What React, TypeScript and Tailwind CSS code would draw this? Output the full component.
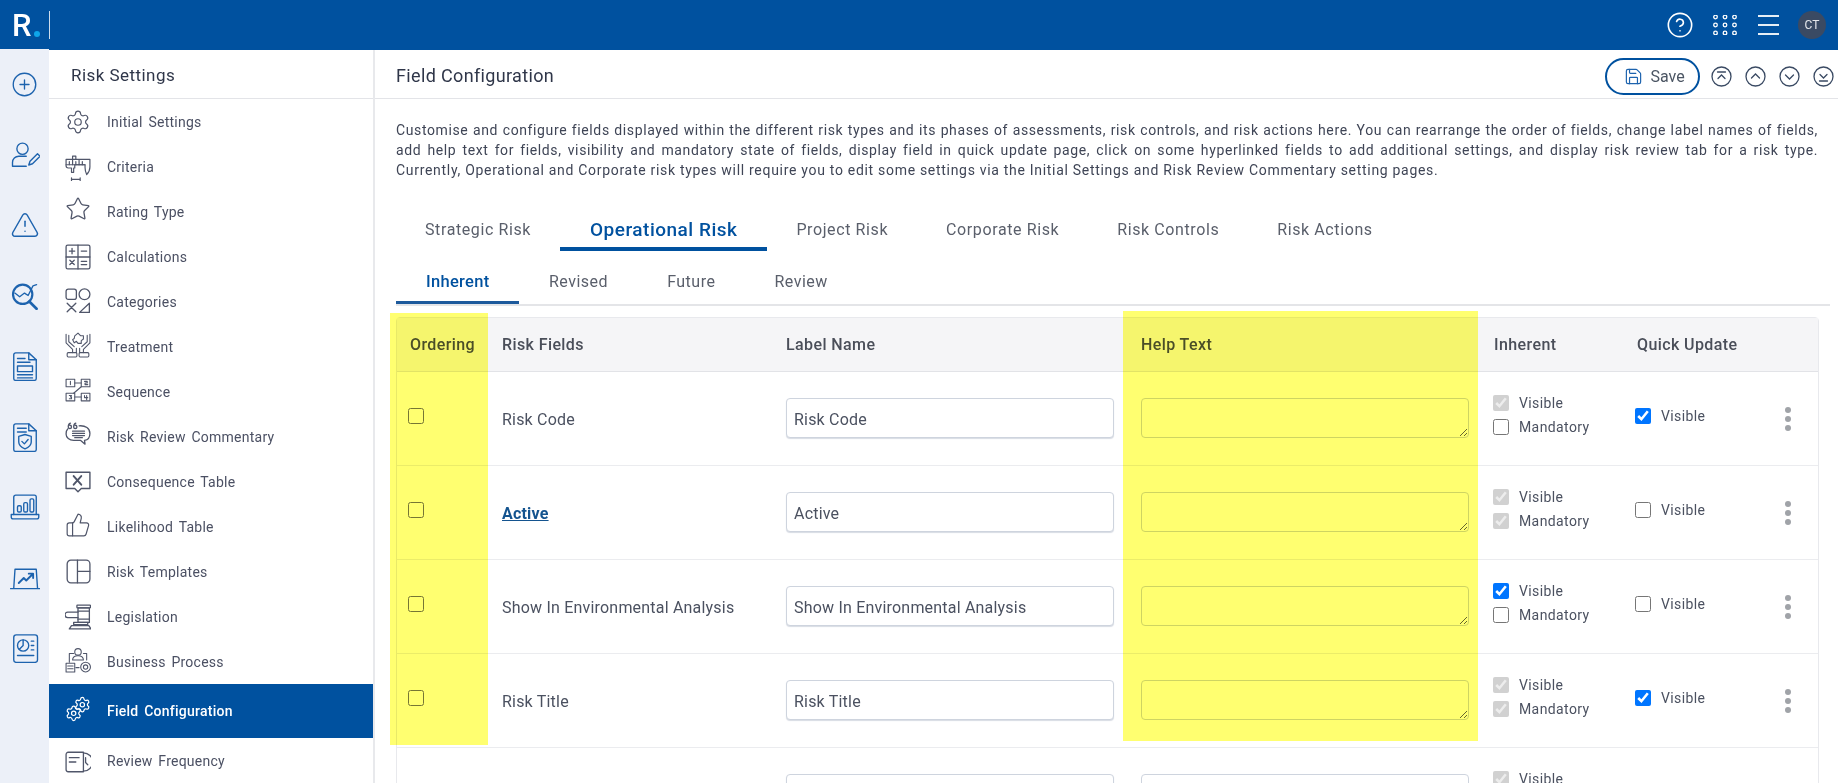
import React from 'react';
import {
  CircleHelp,
  CirclePlus,
  Save,
  Settings,
  Star,
  ThumbsUp,
  TriangleAlert,
} from 'lucide-react';

const iconProps = {
  width: 26,
  height: 26,
  viewBox: '0 0 24 24',
  fill: 'none',
  stroke: 'currentColor',
  strokeWidth: 1.2,
  strokeLinecap: 'round' as const,
  strokeLinejoin: 'round' as const,
};

// sidebar icons
const CriteriaIcon = () => (
  <svg {...iconProps} strokeWidth={1.1}>
    <path d="M1 4h22v7c0 3-1 5-3 7-1-2-1.500-4-1.500-6.500V9H9v3H8v4H6v-4H3a2 2 0 0 1-2-2z" />
    <path d="M7 4V1h3v3M1 9h17.500" />
    <path d="M4 6v3M7 5v4M10 6v3M13 5v4M16 6v3" />
    <path d="M6 22.500h8M6 21v3M14 21v3" />
  </svg>
);

const CalcIcon = () => (
  <svg {...iconProps}>
    <rect x="1" y="1" width="22" height="22" rx="1.5" />
    <path d="M12 1v22M1 12h22M4 6.500h5M6.500 4v5M15 6.500h5M4.500 15l4 4M8.500 15l-4 4M15 16h5M15 19h5" />
  </svg>
);

const CategoriesIcon = () => (
  <svg {...iconProps}>
    <rect x="1" y="1" width="9.500" height="9.500" rx="2" />
    <circle cx="18" cy="5.800" r="5" />
    <path d="M2 14l8 8M10 14l-8 8M22.500 14v8.500h-9z" />
  </svg>
);

const TreatmentIcon = () => (
  <svg {...iconProps} strokeWidth={1}>
    <path d="M9 3.500l3-2.500 2.500 2.500h2.500v3l-2 1.500v2.500h-3l-1.500-2-2 1.500-1.500-3 1.500-1z" />
    <path d="M1 2v8l6 6v3M23 2v8l-6 6v3M3.500 3v6l5 4.500M20.500 3v6l-5 4.500M10.500 15v4M13.500 15v4" />
    <rect x="2" y="19" width="9" height="4" rx="1" />
    <rect x="13" y="19" width="9" height="4" rx="1" />
  </svg>
);

const SequenceIcon = () => (
  <svg {...iconProps} strokeWidth={1}>
    <rect x="1" y="2" width="8" height="7" />
    <rect x="15" y="2" width="8" height="7" />
    <rect x="1" y="15" width="8" height="7" />
    <rect x="15" y="15" width="8" height="7" />
    <path d="M9 5.500h6M9 18.500h6M15 9l-7 6M5 4v3M18 4h2.500v1.500H18.500V7H21M4 17h2l-1 1.500h1V20H4M18 17v2h3M20 17v4" />
  </svg>
);

const CommentaryIcon = () => (
  <svg {...iconProps}>
    <path d="M13 3.500c6-.500 10 2.500 10 7 0 3.500-2 6-5 6.500l.500 3.500-4-3.500H8c-4 0-7-2.500-7-6 0-2 .500-3.500 1.500-4.500" />
    <path d="M7 8.500h11M7 10.500h11M7 12.500h11M9 14.500h7" />
    <path d="M3 4.500a1.500 1.500 0 1 0 1.500-1.500M5 1C3.500 1.500 3 3 3 4.500M8 4.500A1.500 1.500 0 1 0 9.500 3M10 1C8.500 1.500 8 3 8 4.500" />
  </svg>
);

const ConsequenceIcon = () => (
  <svg {...iconProps} strokeWidth={1.3}>
    <path d="M1 3h22v15H15l-3 3-3-3H1z" />
    <path d="M8 6.500l7 8M15 6.500l-7 8" strokeWidth={1.800} />
  </svg>
);

const TemplateIcon = () => (
  <svg {...iconProps}>
    <rect x="2" y="1" width="21" height="21" rx="3.500" />
    <path d="M11.500 1v21M11.500 11.500H23" />
  </svg>
);

const GavelIcon = () => (
  <svg {...iconProps} strokeWidth={1.2}>
    <rect x="11" y="1" width="12.500" height="2.500" rx=".500" />
    <rect x="12" y="3.500" width="10.500" height="13.500" />
    <path d="M12 6.500h10.500M12 14h10.500" />
    <path d="M12 7.500H2.500a2.500 2.500 0 0 0 0 5H12" />
    <path d="M8 17h13v2H8zM4 23l2-3h16l2 3z" />
  </svg>
);

const BusinessIcon = () => (
  <svg {...iconProps} strokeWidth={1}>
    <circle cx="12" cy="4.500" r="3" />
    <path d="M7 12c0-3 2-4 5-4s5 1 5 4zM4 14V6h4M20 6h-3M20 6v6" />
    <rect x="1" y="15" width="8" height="8" />
    <path d="M2.500 17.500h5M2.500 20h5M10 19h3" />
    <circle cx="19" cy="18.500" r="4.500" />
    <circle cx="19" cy="18.500" r="2" />
  </svg>
);

const FieldConfigIcon = () => (
  <svg {...iconProps} strokeWidth={1.2}>
    <Settings x={8} y={0} width={16} height={16} strokeWidth={1.700} />
    <Settings x={0} y={8} width={16} height={16} strokeWidth={1.700} />
  </svg>
);

const FrequencyIcon = () => (
  <svg {...iconProps}>
    <path d="M17 3H3a2 2 0 0 0-2 2v14a2 2 0 0 0 2 2h14z" />
    <path d="M17 3.500a8.500 8.500 0 0 1 0 17M4 8h9M4 12h6M19 8v4.500l2 2" />
  </svg>
);

// left rail icons
const railProps = { ...iconProps, width: 30, height: 30, strokeWidth: 1.100 };

const UserPenIcon = () => (
  <svg {...railProps}>
    <circle cx="10" cy="7" r="4.500" />
    <path d="M2 21v-3a5 5 0 0 1 5-5h6M2 21h11M15 20l1-3 6-6 2 2-6 6z" />
  </svg>
);

const AnalyticsIcon = () => (
  <svg {...railProps} strokeWidth={1.100} width={29} height={29}>
    <circle cx="10.500" cy="11" r="8" strokeWidth={1.800} />
    <path d="M16 17l6 6" strokeWidth={2.200} />
    <path d="M4 10l4 3 4-3 3 2 4-8 3-1" />
  </svg>
);

const DocIcon = () => (
  <svg {...railProps}>
    <path d="M3 3a1.500 1.500 0 0 1 1.500-1.500H15L21 7v15a1.500 1.500 0 0 1-1.500 1.500h-15A1.500 1.500 0 0 1 3 22z" />
    <path d="M15 1.500V7h6M6 6h6M6 9h10M6 19h12M6 21.500h12" />
    <rect x="6" y="12" width="12" height="4.500" />
  </svg>
);

const ShieldDocIcon = () => (
  <svg {...railProps}>
    <path d="M3 3a1.500 1.500 0 0 1 1.500-1.500H15L21 7v15a1.500 1.500 0 0 1-1.500 1.500h-15A1.500 1.500 0 0 1 3 22z" />
    <path d="M15 1.500V7h6M6 5h7M6 8h7" />
    <path d="M12 10l5 1.500V16c0 3-2.500 4.500-5 5.500-2.500-1-5-2.500-5-5.500v-4.500z" />
    <path d="M9.500 15.500l2 2 3-3.500" />
  </svg>
);

const LaptopBarsIcon = () => (
  <svg {...railProps}>
    <path d="M3 18V4a1.500 1.500 0 0 1 1.500-1.500h15A1.500 1.500 0 0 1 21 4v14" />
    <path d="M1 18h22v2a1.500 1.500 0 0 1-1.500 1.500h-19A1.500 1.500 0 0 1 1 20z" />
    <rect x="6" y="11" width="3" height="5" rx="1" />
    <rect x="11" y="8.500" width="3" height="7.500" rx="1" />
    <rect x="16" y="5.500" width="3" height="10.500" rx="1" />
  </svg>
);

const LaptopTrendIcon = () => (
  <svg {...railProps}>
    <path d="M3 20l1-15h17l1 15M0.500 20.500h24" />
    <path d="M7 16l4-4 2 2 5-5M15 8.500h3.500V12" strokeWidth={1.500} />
  </svg>
);

const ReportIcon = () => (
  <svg {...railProps}>
    <rect x="3" y="1.500" width="19" height="22" rx="2" />
    <circle cx="10.500" cy="10" r="4.500" />
    <path d="M10.500 5.500V10l-3 3M17 6.500h2M17 10h2M17 13.500h2M6 18h13" />
  </svg>
);

const GridDots = () => (
  <svg width="24" height="20" viewBox="0 0 24 20" fill="none" stroke="currentColor" strokeWidth="1.300">
    {[2.500, 12, 21.500].map((cx) =>
      [2, 10, 18].map((cy) => <circle key={`${cx}-${cy}`} cx={cx} cy={cy} r="1.800" />),
    )}
  </svg>
);

// round arrows next to the save button
const RoundNav = ({ d }: { d: string }) => (
  <svg width="21" height="21" viewBox="0 0 21 21" fill="none" stroke="#3a4a63" strokeWidth="1.300" strokeLinecap="round">
    <circle cx="10.500" cy="10.500" r="9.500" />
    <path d={d} />
  </svg>
);

const menuItems = [
  { label: 'Initial Settings', icon: <Settings size={26} strokeWidth={1.1} />, shift: '-mt-[2px]' },
  { label: 'Criteria', icon: <CriteriaIcon /> },
  { label: 'Rating Type', icon: <Star size={26} strokeWidth={1.2} />, shift: '-mt-[8px]' },
  { label: 'Calculations', icon: <CalcIcon />, shift: '-mt-[2px]' },
  { label: 'Categories', icon: <CategoriesIcon />, shift: '-mt-[4px]' },
  { label: 'Treatment', icon: <TreatmentIcon />, shift: '-mt-[6px]' },
  { label: 'Sequence', icon: <SequenceIcon />, shift: '-mt-[6px]' },
  { label: 'Risk Review Commentary', icon: <CommentaryIcon />, shift: '-mt-[6px]' },
  { label: 'Consequence Table', icon: <ConsequenceIcon />, shift: '-mt-[2px]' },
  { label: 'Likelihood Table', icon: <ThumbsUp size={26} strokeWidth={1.1} />, shift: '-mt-[6px]' },
  { label: 'Risk Templates', icon: <TemplateIcon />, shift: '-mt-[2px]' },
  { label: 'Legislation', icon: <GavelIcon />, shift: '-mt-[2px]' },
  { label: 'Business Process', icon: <BusinessIcon />, shift: '-mt-[5px]' },
];

const railIcons = [
  <CirclePlus key="add" size={27} strokeWidth={1.2} />,
  <UserPenIcon key="user" />,
  <TriangleAlert key="alert" size={30} strokeWidth={1.2} />,
  <AnalyticsIcon key="analytics" />,
  <DocIcon key="doc" />,
  <ShieldDocIcon key="shield" />,
  <LaptopBarsIcon key="bars" />,
  <LaptopTrendIcon key="trend" />,
  <ReportIcon key="report" />,
];

type Box = 'on' | 'off' | 'locked';

type Row = {
  name: string;
  label: string;
  link?: boolean;
  visible: Box;
  mandatory: Box;
  quick: boolean;
};

const rows: Row[] = [
  { name: 'Risk Code', label: 'Risk Code', visible: 'locked', mandatory: 'off', quick: true },
  { name: 'Active', label: 'Active', link: true, visible: 'locked', mandatory: 'locked', quick: false },
  { name: 'Show In Environmental Analysis', label: 'Show In Environmental Analysis', visible: 'on', mandatory: 'off', quick: false },
  { name: 'Risk Title', label: 'Risk Title', visible: 'locked', mandatory: 'locked', quick: true },
  { name: '', label: '', visible: 'locked', mandatory: 'off', quick: false },
];

const columns = 'grid grid-cols-[93px_284px_355px_353px_143px_1fr]';

const CheckLine = ({ state, text }: { state: Box; text: string }) => (
  <label className="flex items-center gap-[10px] h-[24.500px]">
    <input
      type="checkbox"
      readOnly
      checked={state !== 'off'}
      disabled={state === 'locked'}
      className="w-[16px] h-[16px] m-0"
    />
    <span className="text-[14px] tracking-[0.4px] text-[#4b5160] mt-[1px]">{text}</span>
  </label>
);

const App: React.FC = () => {
  return (
    <div className="relative h-[783px] overflow-hidden flex flex-col bg-white font-['Roboto',sans-serif]">
      {/* top bar */}
      <header className="h-[50px] shrink-0 bg-[#00519f] flex items-center text-white">
        <div className="w-[49px] h-full flex items-center pl-[12px]">
          <span className="text-[31px] leading-none font-medium">R</span>
          <span className="w-[6px] h-[6px] rounded-full bg-[#0ea5e9] mt-[17px] ml-[2px]" />
        </div>
        <div className="w-px h-[28px] bg-white/80" />
        <div className="ml-auto flex items-center pr-[12px]">
          <CircleHelp size={28} strokeWidth={1.4} />
          <div className="ml-[19px]"><GridDots /></div>
          <div className="ml-[21px] flex flex-col gap-[7px] w-[21px]">
            <span className="h-[2px] bg-white/90" />
            <span className="h-[2px] bg-white/90" />
            <span className="h-[2px] bg-white/90" />
          </div>
          <div className="ml-[19px] w-[28px] h-[28px] rounded-full bg-[#3a4a63] flex items-center justify-center text-[12px] text-gray-200">
            CT
          </div>
        </div>
      </header>

      <div className="flex flex-1 min-h-0">
        {/* icon rail */}
        <nav className="w-[49px] shrink-0 bg-[#ecf0f8] text-[#1d63ae] flex flex-col items-center -mt-px">
          {railIcons.map((icon, idx) => (
            <div key={idx} className="h-[70.5px] shrink-0 flex items-center justify-center">
              {icon}
            </div>
          ))}
        </nav>

        {/* settings menu */}
        <aside className="w-[326px] shrink-0 border-r-2 border-[#e8e9ec] flex flex-col">
          <div className="h-[49px] shrink-0 border-b border-[#e3e4e8] flex items-center pl-[22px] pt-[3px] text-[17px] tracking-[0.45px] text-[#2f3649]">
            Risk Settings
          </div>
          {menuItems.map((item) => (
            <div key={item.label} className="h-[45px] shrink-0 flex items-center pl-[16px] pt-[2px] text-[14px] tracking-[0.25px] [word-spacing:2px] text-[#4b5063]">
              <span className={`w-[42px] shrink-0 text-[#50566a] ${item.shift ?? ''}`}>{item.icon}</span>
              {item.label}
            </div>
          ))}
          <div className="h-[54px] shrink-0 bg-[#00519f] text-white flex items-center pl-[16px] pt-[1px] text-[14px] font-medium tracking-[0.25px] [word-spacing:2px]">
            <span className="w-[42px] shrink-0 -mt-[6px]"><FieldConfigIcon /></span>
            Field Configuration
          </div>
          <div className="h-[45px] shrink-0 flex items-center pl-[16px] pt-[2px] text-[14px] tracking-[0.25px] [word-spacing:2px] text-[#4b5063]">
            <span className="w-[42px] shrink-0 text-[#50566a]"><FrequencyIcon /></span>
            Review Frequency
          </div>
        </aside>

        {/* main panel */}
        <main className="flex-1 min-w-0 flex flex-col">
          <div className="h-[49px] shrink-0 border-b border-[#e3e4e8] flex items-center justify-between pl-[21px] pr-[4px]">
            <h1 className="text-[18px] tracking-[0.35px] text-[#2f3649] pt-[3px]">Field Configuration</h1>
            <div className="flex items-center mt-[5px]">
              <button className="w-[95px] h-[37px] pl-[4px] rounded-full border-2 border-[#00519f] flex items-center justify-center gap-[7px] text-[16px] text-[#4b5563]">
                <Save size={19} strokeWidth={1.5} className="text-[#1d63ae]" />
                Save
              </button>
              <div className="ml-[11px] flex items-center gap-[13px]">
                <RoundNav d="M6.500 6h8M7 12.500l3.500-3.500 3.500 3.500" />
                <RoundNav d="M6.500 12l4-4 4 4" />
                <RoundNav d="M6.500 9l4 4 4-4" />
                <RoundNav d="M7 8.500l3.500 3.500 3.500-3.500M6.500 15h8" />
              </div>
            </div>
          </div>

          <div className="pl-[21px] pr-[8px] flex flex-col min-h-0">
            <p className="pt-[21px] pr-[12px] text-[14px] leading-[20px] tracking-[0.62px] text-[#3f4556]">
              <span className="block whitespace-nowrap text-justify [text-align-last:justify]">
                Customise and configure fields displayed within the different risk types and its phases of assessments, risk controls, and risk actions here. You can rearrange the order of fields, change label names of fields,
              </span>
              <span className="block text-justify [text-align-last:justify]">
                add help text for fields, visibility and mandatory state of fields, display field in quick update page, click on some hyperlinked fields to add additional settings, and display risk review tab for a risk type.
              </span>
              <span className="block tracking-[0.7px]">
                Currently, Operational and Corporate risk types will require you to edit some settings via the Initial Settings and Risk Review Commentary setting pages.
              </span>
            </p>

            {/* risk type tabs */}
            <div className="mt-[29px] flex text-[16px] tracking-[0.6px] text-[#5a5f6b]">
              {['Strategic Risk', 'Operational Risk', 'Project Risk', 'Corporate Risk', 'Risk Controls', 'Risk Actions'].map((tab) =>
                tab === 'Operational Risk' ? (
                  <div key={tab} className="h-[42px] px-[30px] pt-[4px] flex items-center border-b-4 border-[#00519f] text-[19px] tracking-[0.5px] font-medium text-[#00519f]">
                    {tab}
                  </div>
                ) : (
                  <div key={tab} className="h-[42px] px-[29px] flex items-center">{tab}</div>
                ),
              )}
            </div>

            {/* assessment phase tabs */}
            <div className="mt-[14px] flex border-b-2 border-[#e4e5e8] text-[16px] tracking-[0.5px] text-[#5a5f6b]">
              {['Inherent', 'Revised', 'Future', 'Review'].map((tab, idx) => (
                <div
                  key={tab}
                  className={
                    idx === 0
                      ? 'h-[39px] px-[30px] pb-[2px] flex items-center border-b-[3px] border-[#1d5a9c] text-[16.500px] tracking-[0.3px] font-medium text-[#00519f]'
                      : 'h-[39px] px-[29.500px] pb-[2px] flex items-center border-b-[3px] border-transparent'
                  }
                >
                  {tab}
                </div>
              ))}
            </div>

            {/* field table */}
            <div className="mt-[11px] mr-[11px] border border-[#e8e9ed] rounded-t-[4px] text-[16px] tracking-[0.2px] text-[#4b5160]">
              <div className={`${columns} h-[54px] items-center bg-[#f5f5f7] border-b border-[#e2e3e7] font-medium tracking-[0.4px] text-[#4a4e59]`}>
                <div className="pl-[13px]">Ordering</div>
                <div className="pl-[12px]">Risk Fields</div>
                <div className="pl-[12px]">Label Name</div>
                <div className="pl-[12px]">Help Text</div>
                <div className="pl-[12px]">Inherent</div>
                <div className="pl-[12px]">Quick Update</div>
              </div>
              {rows.map((row, idx) => (
                <div key={idx} className={`${columns} h-[94px] items-center border-b border-[#ebecef]`}>
                  <div className="pl-[11px] -mt-[6px] flex">
                    <input type="checkbox" readOnly className="w-[16px] h-[16px] m-0" />
                  </div>
                  <div className="pl-[12px] mt-[2px]">
                    {row.link ? (
                      <a className="font-bold underline text-[#14548f]">{row.name}</a>
                    ) : (
                      row.name
                    )}
                  </div>
                  <div className="pl-[12px] -mt-[2px]">
                    <input
                      readOnly
                      value={row.label}
                      className="w-[328px] h-[40px] px-[7px] pt-[4px] rounded-[4px] border border-[#ced4de] shadow-[0_1px_1px_#d8dce4] text-[#4b5160] bg-white outline-none"
                    />
                  </div>
                  <div className="pl-[12px] -mt-[2px] flex">
                    <textarea
                      readOnly
                      className="w-[328px] h-[40px] rounded-[4px] border border-[#ced4de] bg-white resize-y outline-none"
                    />
                  </div>
                  <div className="pl-[11px] -mt-[7px]">
                    <CheckLine state={row.visible} text="Visible" />
                    <CheckLine state={row.mandatory} text="Mandatory" />
                  </div>
                  <div className="pl-[10px] pr-[27px] -mt-[6px] flex items-center justify-between">
                    <CheckLine state={row.quick ? 'on' : 'off'} text="Visible" />
                    <div className="flex flex-col gap-[3px] mt-[6px]">
                      <span className="w-[6px] h-[6px] rounded-full bg-[#a0a3a8]" />
                      <span className="w-[6px] h-[6px] rounded-full bg-[#a0a3a8]" />
                      <span className="w-[6px] h-[6px] rounded-full bg-[#a0a3a8]" />
                    </div>
                  </div>
                </div>
              ))}
            </div>
          </div>
        </main>
      </div>

      {/* yellow highlighter marks over the two columns */}
      <div className="absolute left-[390px] top-[313px] w-[98px] h-[432px] bg-[#ffff70] mix-blend-multiply pointer-events-none" />
      <div className="absolute left-[1123px] top-[311px] w-[355px] h-[430px] bg-[#ffff70] mix-blend-multiply pointer-events-none" />
    </div>
  );
};

export default App;
